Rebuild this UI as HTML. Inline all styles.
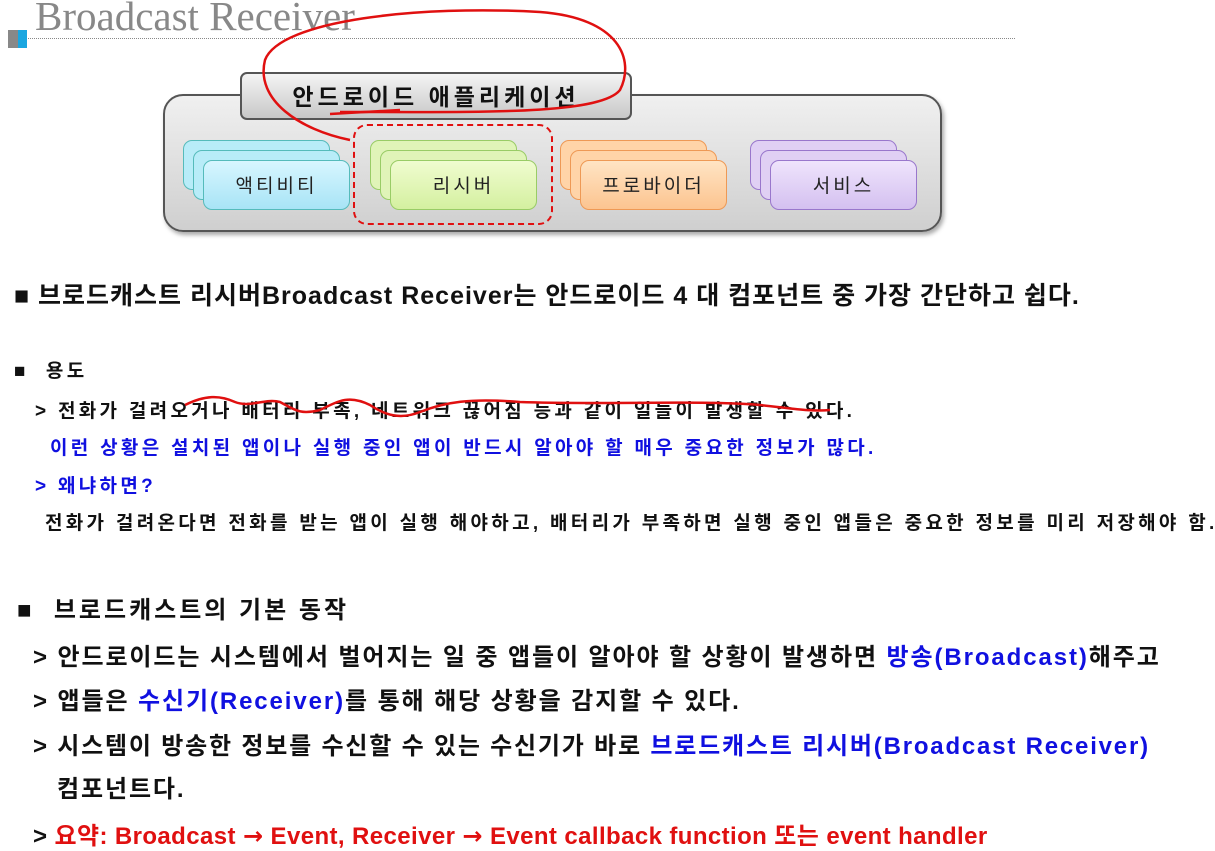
<!DOCTYPE html><html><head><meta charset="utf-8"><style>
body{margin:0;width:1215px;height:851px;background:#fff;position:relative;overflow:hidden;font-family:"Liberation Sans","Noto Sans CJK KR",sans-serif;}
.a{position:absolute;white-space:nowrap;}
.card{position:absolute;width:147px;height:50px;border-radius:9px;border:1px solid;box-sizing:border-box;}
.lbl{position:absolute;width:147px;text-align:center;font-size:19px;line-height:50px;color:#222;letter-spacing:3px}
.b{color:#1010e0}.r{color:#e01010}
.ar{font-family:"DejaVu Sans",sans-serif;font-weight:bold}
.m{font-size:19px;font-weight:bold;letter-spacing:3.3px}
.L{font-size:24px;font-weight:bold;color:#111;letter-spacing:1.9px}
</style></head><body>
<div class="a" style="left:35px;top:-8px;font:41px 'Liberation Serif',serif;color:#888;">Broadcast Receiver</div>
<div class="a" style="left:8px;top:30px;width:12px;height:18px;background:#888"></div>
<div class="a" style="left:18px;top:30px;width:9px;height:18px;background:#1aa6e0"></div>
<div class="a" style="left:28px;top:38px;width:987px;border-top:1px dotted #888"></div>

<div class="a" style="left:163px;top:94px;width:779px;height:138px;border-radius:20px;border:2px solid #555;box-sizing:border-box;background:linear-gradient(#f0f0f0,#cfcfcf);box-shadow:2px 3px 4px #aaa"></div>
<div class="a" style="left:240px;top:72px;width:392px;height:48px;border-radius:7px;border:2px solid #555;box-sizing:border-box;background:linear-gradient(#f4f4f4,#c8c8c8);text-align:center;font-size:23px;font-weight:bold;line-height:46px;color:#111;letter-spacing:4px">안드로이드 애플리케이션</div>

<div class="card" style="left:183px;top:140px;background:#b8ecf8;border-color:#5bb;"></div>
<div class="card" style="left:193px;top:150px;background:#b8ecf8;border-color:#5bb;"></div>
<div class="card" style="left:203px;top:160px;background:linear-gradient(#d8f6ff,#a8e4f6);border-color:#5bb;"></div>
<div class="lbl" style="left:203px;top:162px">액티비티</div>

<div class="card" style="left:370px;top:140px;background:#e0f4b8;border-color:#9c6;"></div>
<div class="card" style="left:380px;top:150px;background:#e0f4b8;border-color:#9c6;"></div>
<div class="card" style="left:390px;top:160px;background:linear-gradient(#f0fcd0,#d4f0a0);border-color:#9c6;"></div>
<div class="lbl" style="left:390px;top:162px">리시버</div>

<div class="card" style="left:560px;top:140px;background:#ffd4a8;border-color:#e95;"></div>
<div class="card" style="left:570px;top:150px;background:#ffd4a8;border-color:#e95;"></div>
<div class="card" style="left:580px;top:160px;background:linear-gradient(#ffe4c4,#fcc490);border-color:#e95;"></div>
<div class="lbl" style="left:580px;top:162px">프로바이더</div>

<div class="card" style="left:750px;top:140px;background:#e0d0f4;border-color:#97c;"></div>
<div class="card" style="left:760px;top:150px;background:#e0d0f4;border-color:#97c;"></div>
<div class="card" style="left:770px;top:160px;background:linear-gradient(#efe4fc,#d4c0f0);border-color:#97c;"></div>
<div class="lbl" style="left:770px;top:162px">서비스</div>

<div class="a" style="left:353px;top:124px;width:200px;height:101px;border:2px dashed #e01010;border-radius:14px;box-sizing:border-box"></div>

<svg class="a" style="left:0;top:0;z-index:2" width="1215" height="851"><g fill="none" stroke="#e01010" stroke-width="2.5">
<path d="M350 140 C300 130 255 100 265 60 C280 20 420 5 540 12 C620 18 635 60 620 90 C600 115 480 112 340 112"/>
<path d="M330 114 L400 110"/>
<path d="M185 405 C205 395 220 395 235 402 C250 408 265 398 280 402 C295 410 300 415 320 410 C340 400 350 395 370 405 C385 415 400 420 420 412 C445 402 470 398 520 402 C600 405 700 400 760 405 C790 408 810 412 830 410"/>
</g></svg>

<div class="a" style="left:14px;top:276px;font-size:25px;font-weight:bold;color:#111;letter-spacing:1px">■ 브로드캐스트 리시버Broadcast Receiver는 안드로이드 4 대 컴포넌트 중 가장 간단하고 쉽다.</div>
<div class="a m" style="left:14px;top:356px;color:#111">■&nbsp; 용도</div>
<div class="a m" style="left:35px;top:396px;color:#111">&gt; 전화가 걸려오거나 배터리 부족, 네트워크 끊어짐 등과 같이 일들이 발생할 수 있다.</div>
<div class="a m b" style="left:50px;top:433px">이런 상황은 설치된 앱이나 실행 중인 앱이 반드시 알아야 할 매우 중요한 정보가 많다.</div>
<div class="a m b" style="left:35px;top:471px">&gt; 왜냐하면?</div>
<div class="a m" style="left:45px;top:508px;color:#111">전화가 걸려온다면 전화를 받는 앱이 실행 해야하고, 배터리가 부족하면 실행 중인 앱들은 중요한 정보를 미리 저장해야 함.</div>

<div class="a L" style="left:17px;top:590px;letter-spacing:3px">■&nbsp; 브로드캐스트의 기본 동작</div>
<div class="a L" style="left:33px;top:637px">&gt; 안드로이드는 시스템에서 벌어지는 일 중 앱들이 알아야 할 상황이 발생하면 <span class="b">방송(Broadcast)</span>해주고</div>
<div class="a L" style="left:33px;top:681px">&gt; 앱들은 <span class="b">수신기(Receiver)</span>를 통해 해당 상황을 감지할 수 있다.</div>
<div class="a L" style="left:33px;top:726px;letter-spacing:1.8px">&gt; 시스템이 방송한 정보를 수신할 수 있는 수신기가 바로 <span class="b">브로드캐스트 리시버(Broadcast Receiver)</span></div>
<div class="a L" style="left:57px;top:769px">컴포넌트다.</div>
<div class="a L" style="left:33px;top:816px;letter-spacing:0.4px">&gt; <span class="r">요약: Broadcast <span class="ar">→</span> Event, Receiver <span class="ar">→</span> Event callback function 또는 event handler</span></div>
</body></html>
